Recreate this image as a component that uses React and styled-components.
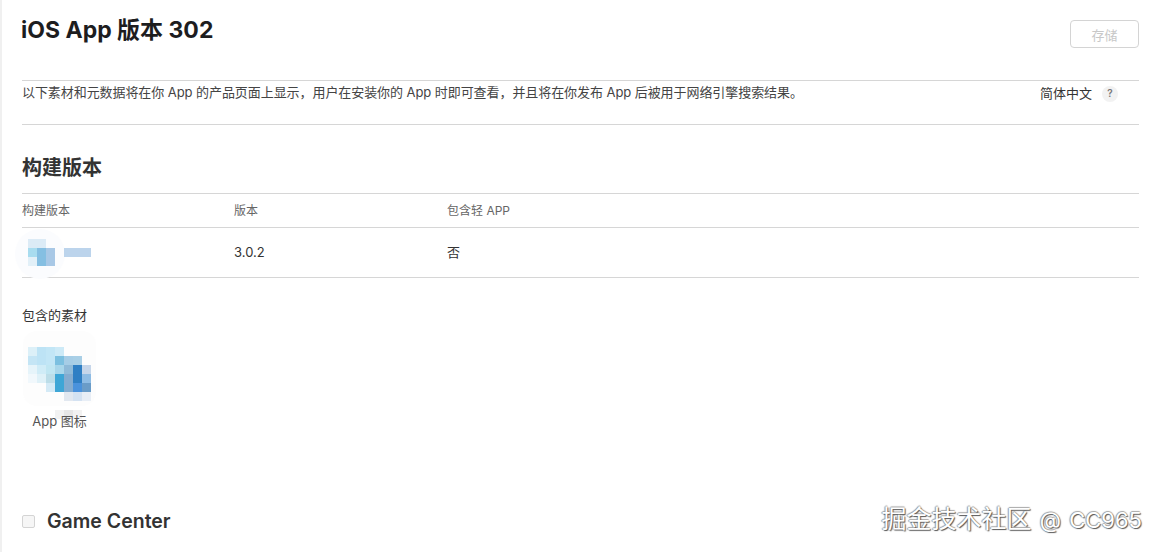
import React from 'react';
import styled, { createGlobalStyle } from 'styled-components';

const GlobalStyle = createGlobalStyle`
  html, body {
    margin: 0;
    padding: 0;
    background: #fff;
  }

  body {
    font-family: Inter, "Liberation Sans", "Noto Sans CJK SC", sans-serif;
    color: #333;
    overflow: hidden;
  }
`;

const Page = styled.div`
  position: relative;
  box-sizing: border-box;
  width: 1159px;
  height: 552px;
  padding: 0 20px 0 22px;
  border-left: 2px solid #f0f0f0;
  overflow: hidden;
`;

const Header = styled.header`
  display: flex;
  justify-content: space-between;
  align-items: flex-start;
  height: 80px;
  border-bottom: 1px solid #d6d6d6;
  margin-left: -2px;
`;

const Title = styled.h1`
  margin: 15px 0 0 -1px;
  font-size: 23px;
  line-height: 30px;
  font-weight: 700;
  color: #1d1d1f;
`;

const SaveButton = styled.button`
  width: 69px;
  height: 28px;
  margin-top: 20px;
  padding: 0;
  border: 1px solid #d4d4d4;
  border-radius: 4px;
  background: #fff;
  color: #c8c8c8;
  font: inherit;
  font-size: 13px;
`;

const Intro = styled.div`
  display: flex;
  justify-content: space-between;
  height: 43px;
  margin-left: -2px;
  border-bottom: 1px solid #d6d6d6;
`;

const IntroText = styled.p`
  margin: 3px 0 0;
  font-size: 13px;
  line-height: 17px;
  letter-spacing: -0.07px;
  color: #444;
`;

const Locale = styled.div`
  display: flex;
  align-items: center;
  align-self: flex-start;
  gap: 10px;
  margin: 4px 21px 0 0;
  font-size: 13px;
  line-height: 17px;
  color: #333;
`;

const Hint = styled.span`
  display: flex;
  align-items: center;
  justify-content: center;
  width: 16px;
  height: 16px;
  border-radius: 50%;
  background: #f2f2f2;
  color: #777;
  font-size: 10px;
  font-weight: 600;
`;

const SectionTitle = styled.h2`
  margin: 0 0 0 -2px;
  padding: 31px 0 12px;
  font-size: 20px;
  line-height: 25px;
  font-weight: 600;
  color: #333;
  border-bottom: 1px solid #d6d6d6;
`;

const BuildGrid = styled.div`
  display: grid;
  grid-template-columns: 212px 213px 1fr;
  margin-left: -2px;
`;

const HeadCell = styled.div`
  display: flex;
  align-items: center;
  box-sizing: border-box;
  height: 34px;
  padding-bottom: 3px;
  border-bottom: 1px solid #d6d6d6;
  font-size: 12px;
  color: #666;
`;

const BodyCell = styled.div`
  display: flex;
  align-items: center;
  box-sizing: border-box;
  height: 50px;
  padding-bottom: 2px;
  border-bottom: 1px solid #d6d6d6;
  font-size: 13px;
  color: #333;
`;

const Assets = styled.section`
  margin-top: 29px;
`;

const AssetsLabel = styled.div`
  margin-left: -2px;
  font-size: 13px;
  line-height: 17px;
  color: #333;
`;

const AssetItem = styled.figure`
  display: flex;
  flex-direction: column;
  align-items: center;
  width: 75px;
  margin: 0 0 0 -2px;
`;

const AssetCaption = styled.figcaption`
  font-size: 13px;
  line-height: 17px;
  color: #555;
`;

const GameCenter = styled.div`
  display: flex;
  align-items: center;
  gap: 12px;
  margin: 78px 0 0 -2px;
`;

const Checkbox = styled.span`
  box-sizing: border-box;
  width: 13px;
  height: 13px;
  border: 1px solid #d4d4d4;
  border-radius: 2px;
  background: #f6f6f6;
`;

const GameCenterLabel = styled.span`
  font-size: 19.5px;
  line-height: 26px;
  font-weight: 600;
  color: #333;
`;

const Watermark = styled.div`
  position: absolute;
  right: 17px;
  bottom: 18px;
  font-size: 25px;
  line-height: 28px;
  color: #fff;
  text-shadow: 1px 1px 1px #555, -1px 0 1px #999, 0 -1px 1px #aaa;
  white-space: nowrap;
`;

const WatermarkHandle = styled.span`
  font-size: 22px;
  word-spacing: 2px;
`;

/* pixelated bits of the censored icon, [x, y, colour] on a 9px raster */
const buildPixels = [
  [0, 0, '#dcebf6'], [1, 0, '#dcebf6'],
  [0, 1, '#a8dcef'], [1, 1, '#85bfe2'], [2, 1, '#a8c8e6'],
  [0, 2, '#e2f0f8'], [1, 2, '#85bfe2'], [2, 2, '#a8c8e6'],
];

const iconPixels = [
  [0, 0, '#dcf0f8'], [1, 0, '#bde3f5'], [2, 0, '#c2e6f6'], [3, 0, '#cdeaf7'],
  [0, 1, '#c4e5f5'], [1, 1, '#bde3f5'], [2, 1, '#c2e6f6'], [3, 1, '#7cc0e0'], [4, 1, '#a6cde6'], [5, 1, '#a9cfe6'],
  [0, 2, '#e6f4fa'], [1, 2, '#d0ecf7'], [2, 2, '#c0e6f2'], [3, 2, '#a8d6ea'], [4, 2, '#8fbad8'], [5, 2, '#2f7fc4'], [6, 2, '#c6d6ea'],
  [0, 3, '#f1f8fc'], [1, 3, '#dff1f8'], [2, 3, '#bcdde8'], [3, 3, '#3ea6d6'], [4, 3, '#84acd0'], [5, 3, '#2f7fc4'], [6, 3, '#8ebce4'],
  [2, 4, '#d4eaf6'], [3, 4, '#3ea6d6'], [4, 4, '#84acd0'], [5, 4, '#4a92dc'], [6, 4, '#6a9cc8'],
  [4, 5, '#e2e8f0'], [5, 5, '#d4e2f2'], [6, 5, '#e8eef6'],
  [3, 7, '#f2f2f2'], [4, 7, '#e6e6e6'], [5, 7, '#f2f2f2'],
];

const Mosaic = ({ pixels, cols, rows, children }) => (
  <svg width={cols * 9} height={rows * 9} viewBox={`0 0 ${cols * 9} ${rows * 9}`}>
    {children}
    {pixels.map(([x, y, fill]) => (
      <rect key={`${x}-${y}`} x={x * 9} y={y * 9} width="9" height="9" fill={fill} shapeRendering="crispEdges" />
    ))}
  </svg>
);

const BuildThumb = styled.div`
  display: flex;
  align-items: center;
  gap: 9px;
  padding: 2px 0 0 6px;

  svg {
    display: block;
    overflow: visible;
  }
`;

const BuildNumber = styled.span`
  width: 27px;
  height: 9px;
  background: #bcd4ec;
`;

const IconThumb = styled.div`
  padding: 23px 0 12px;

  svg {
    display: block;
    overflow: visible;
  }
`;

export default function App() {
  return (
    <Page>
      <GlobalStyle />
      <Header>
        <Title>iOS App 版本 302</Title>
        <SaveButton disabled>存储</SaveButton>
      </Header>
      <Intro>
        <IntroText>以下素材和元数据将在你 App 的产品页面上显示，用户在安装你的 App 时即可查看，并且将在你发布 App 后被用于网络引擎搜索结果。</IntroText>
        <Locale>
          简体中文
          <Hint>?</Hint>
        </Locale>
      </Intro>
      <SectionTitle>构建版本</SectionTitle>
      <BuildGrid>
        <HeadCell>构建版本</HeadCell>
        <HeadCell>版本</HeadCell>
        <HeadCell>包含轻 APP</HeadCell>
        <BodyCell>
          <BuildThumb>
            <Mosaic pixels={buildPixels} cols={3} rows={3}>
              <circle cx="12" cy="15" r="25" fill="#fbfcfe" />
            </Mosaic>
            <BuildNumber />
          </BuildThumb>
        </BodyCell>
        <BodyCell>3.0.2</BodyCell>
        <BodyCell>否</BodyCell>
      </BuildGrid>
      <Assets>
        <AssetsLabel>包含的素材</AssetsLabel>
        <AssetItem>
          <IconThumb>
            <Mosaic pixels={iconPixels} cols={7} rows={6}>
              <rect x="-5" y="-16" width="73" height="75" rx="14" fill="#fdfdfd" />
            </Mosaic>
          </IconThumb>
          <AssetCaption>App 图标</AssetCaption>
        </AssetItem>
      </Assets>
      <GameCenter>
        <Checkbox />
        <GameCenterLabel>Game Center</GameCenterLabel>
      </GameCenter>
      <Watermark>
        掘金技术社区<WatermarkHandle> @ CC965</WatermarkHandle>
      </Watermark>
    </Page>
  );
}
